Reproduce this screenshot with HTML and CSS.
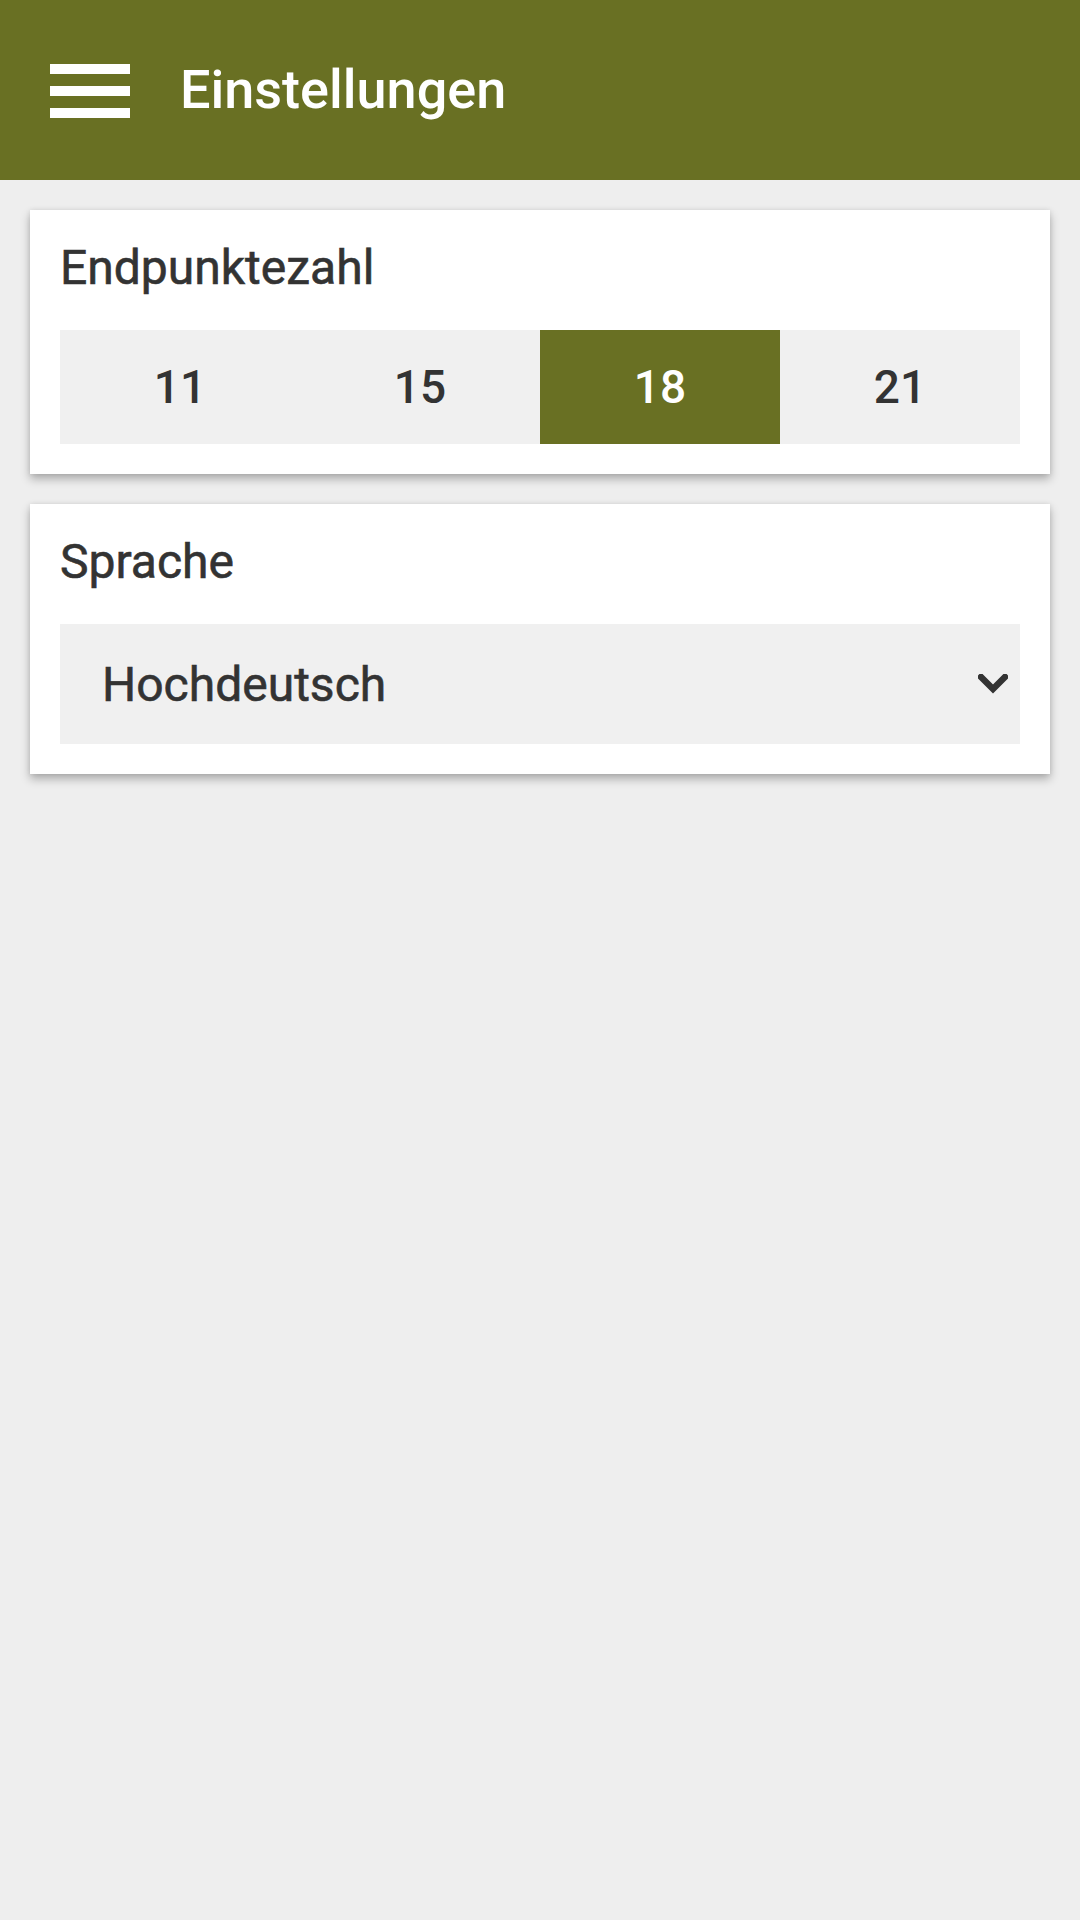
FILE: index.html
```html
<!DOCTYPE html>
<html lang="de">
<head>
<meta charset="utf-8">
<title>Einstellungen</title>
<link rel="stylesheet" href="styles.css">
</head>
<body>
<header class="appbar">
  <div class="menu-icon" aria-label="Menü">
    <span class="bar"></span>
    <span class="bar"></span>
    <span class="bar"></span>
  </div>
  <h1 class="title">Einstellungen</h1>
</header>
<main class="content">
  <section class="card">
    <h2 class="card-label">Endpunktezahl</h2>
    <div class="segments">
      <div class="segment">11</div>
      <div class="segment">15</div>
      <div class="segment selected">18</div>
      <div class="segment">21</div>
    </div>
  </section>
  <section class="card">
    <h2 class="card-label">Sprache</h2>
    <div class="select">
      <span class="select-value">Hochdeutsch</span>
      <svg class="chevron" width="30" height="20" viewBox="0 0 30 20" aria-hidden="true">
        <polyline points="3,3 15,15 27,3" fill="none" stroke="#333333" stroke-width="6.5" stroke-linecap="square" stroke-linejoin="miter"/>
      </svg>
    </div>
  </section>
</main>
</body>
</html>
```
FILE: styles.css
```css
html, body {
  margin: 0;
  padding: 0;
}
body {
  background: #eeeeee;
  font-family: Roboto, "Noto Sans", "Liberation Sans", sans-serif;
  color: #333333;
  width: 1080px;
  min-height: 1920px;
}
.appbar {
  height: 180px;
  background: #697023;
  display: flex;
  align-items: center;
  padding-left: 50px;
  box-sizing: border-box;
}
.menu-icon {
  width: 80px;
  height: 54px;
  display: flex;
  flex-direction: column;
  justify-content: space-between;
  margin-top: 2px;
}
.bar {
  display: block;
  height: 10px;
  background: #ffffff;
}
.title {
  margin: 0 0 0 50px;
  font-size: 54px;
  font-weight: 500;
  color: #ffffff;
  line-height: 1;
}
.content {
  padding: 30px;
  display: flex;
  flex-direction: column;
  gap: 30px;
}
.card {
  background: #ffffff;
  padding: 30px;
  box-shadow: 0 5px 9px rgba(0, 0, 0, 0.28), 0 0 5px rgba(0, 0, 0, 0.08);
}
.card-label {
  margin: 0 0 34px 0;
  font-size: 48px;
  font-weight: 400;
  line-height: 56px;
  color: #333333;
  -webkit-text-stroke: 0.6px #333333;
}
.segments {
  display: flex;
  background: #f0f0f0;
}
.segment {
  flex: 1;
  height: 114px;
  display: flex;
  align-items: center;
  justify-content: center;
  font-size: 46px;
  font-weight: 500;
  color: #333333;
}
.segment.selected {
  background: #697023;
  color: #ffffff;
}
.select {
  height: 120px;
  background: #f0f0f0;
  display: flex;
  align-items: center;
  justify-content: space-between;
  padding: 0 12px 0 42px;
}
.select-value {
  font-size: 48px;
  font-weight: 400;
  color: #333333;
  -webkit-text-stroke: 0.6px #333333;
}
.chevron {
  display: block;
}
```
